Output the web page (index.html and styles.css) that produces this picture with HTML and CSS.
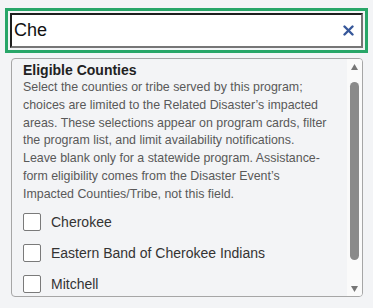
FILE: index.html
```html
<!DOCTYPE html>
<html lang="en">
<head>
    <meta charset="UTF-8">
    <meta name="viewport" content="width=device-width, initial-scale=1.0">
    <title>Eligible Counties</title>
    <link rel="stylesheet" href="styles.css">
</head>
<body>

<div class="search-wrap">
    <div class="search-input">
        <span class="search-text">Che</span>
        <svg class="clear" width="11" height="11" viewBox="0 0 11 11">
            <path d="M1.5 1.5 L9.5 9.5 M9.5 1.5 L1.5 9.5" stroke="#36579a" stroke-width="2.4" stroke-linecap="round"/>
        </svg>
    </div>
</div>

<div class="panel">
    <div class="panel-content">
        <div class="panel-title">Eligible Counties</div>
        <p class="panel-help">Select the counties or tribe served by this program;<br>
            choices are limited to the Related Disaster’s impacted<br>
            areas. These selections appear on program cards, filter<br>
            the program list, and limit availability notifications.<br>
            Leave blank only for a statewide program. Assistance-<br>form eligibility comes from the Disaster Event’s<br>
            Impacted Counties/Tribe, not this field.</p>
        <label class="option"><span class="box"></span>Cherokee</label>
        <label class="option"><span class="box"></span>Eastern Band of Cherokee Indians</label>
        <label class="option"><span class="box"></span>Mitchell</label>
    </div>
    <div class="scrollbar">
        <div class="sb-btn">
            <svg width="7" height="6" viewBox="0 0 7 6"><path d="M3.5 0 L7 6 L0 6 Z" fill="#767676"/></svg>
        </div>
        <div class="sb-track">
            <div class="sb-thumb"></div>
        </div>
        <div class="sb-btn">
            <svg width="7" height="6" viewBox="0 0 7 6"><path d="M0 0 L7 0 L3.5 6 Z" fill="#767676"/></svg>
        </div>
    </div>
</div>

</body>
</html>
```

FILE: styles.css
```css
body {
    margin: 0;
    padding: 8px 5px 0 5px;
    background-color: #f3f4f6;
    font-family: "Liberation Sans", Arial, sans-serif;
}
.search-wrap {
    border: 3px solid #28a668;
    padding: 2px;
    width: 353px;
}
.search-input {
    display: flex;
    align-items: center;
    height: 31px;
    padding: 0 7px 0 2px;
    background-color: #fff;
    border: 2px solid;
    border-color: #1e1e1e #767676 #767676 #1e1e1e;
}
.search-text {
    flex: 1;
    font-size: 18px;
    color: #111;
}
.clear {
    display: block;
}
.panel {
    display: flex;
    margin: 5px 0 0 6px;
    width: 350px;
    height: 237px;
    border: 1px solid #a6a6a6;
    border-radius: 4px;
    background-color: #f3f4f6;
    overflow: hidden;
}
.panel-content {
    flex: 1;
    padding: 2px 0 0 11px;
    overflow: hidden;
}
.panel-title {
    font-size: 14px;
    line-height: 18px;
    font-weight: bold;
    color: #222;
}
.panel-help {
    margin: 0 0 3px 0;
    font-size: 12.4px;
    line-height: 17.8px;
    color: #595959;
    white-space: nowrap;
}
.option {
    display: flex;
    align-items: center;
    height: 31px;
    font-size: 14px;
    color: #333;
}
.box {
    width: 16px;
    height: 16px;
    margin-right: 10px;
    border: 1px solid #7a7a7a;
    border-radius: 2px;
    background-color: #fff;
}
.scrollbar {
    display: flex;
    flex-direction: column;
    width: 15px;
    background-color: #fafafa;
}
.sb-btn {
    display: flex;
    align-items: center;
    justify-content: center;
    height: 15px;
}
.sb-track {
    flex: 1;
    display: flex;
    justify-content: center;
    padding-top: 8px;
}
.sb-thumb {
    width: 9px;
    height: 178px;
    border-radius: 5px;
    background-color: #8a8a8a;
}
```
